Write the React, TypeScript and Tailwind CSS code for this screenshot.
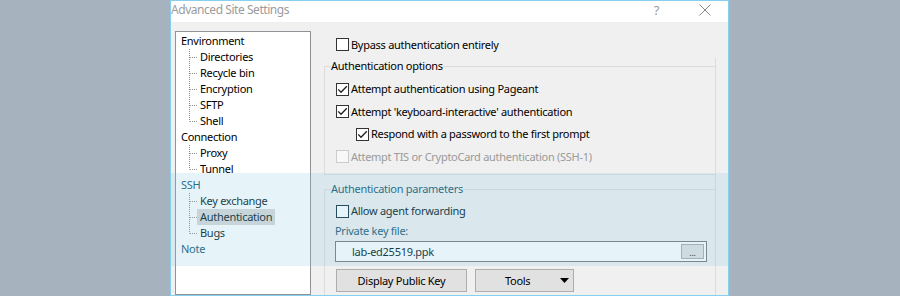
import React from "react";

// tree of pages on the left of the dialog
const tree = [
  { label: "Environment", children: ["Directories", "Recycle bin", "Encryption", "SFTP", "Shell"] },
  { label: "Connection", children: ["Proxy", "Tunnel"] },
  { label: "SSH", children: ["Key exchange", "Authentication", "Bugs"] },
  { label: "Note", children: [] as string[] },
];

// labels that sit under the highlight band get a darker teal tint
const bandHead = ["SSH", "Note"];
const bandItem = ["Key exchange", "Authentication", "Bugs"];

function CheckBox({ checked, disabled, dark }: { checked?: boolean; disabled?: boolean; dark?: boolean }) {
  return (
    <span
      className={`w-[13px] h-[13px] shrink-0 border flex items-center justify-center ${
        disabled ? "border-[#cccccc] bg-[#f8f8f8]" : dark ? "border-[#10303c] bg-white" : "border-[#333333] bg-white"
      }`}
    >
      {checked && (
        <svg width="11" height="11" viewBox="0 0 11 11">
          <path d="M1.2 5.4 L4 8.3 L9.8 2.2" fill="none" stroke="#1f1f1f" strokeWidth="1.3" />
        </svg>
      )}
    </span>
  );
}

function Connector({ last }: { last: boolean }) {
  return (
    <svg width="19" height="16" className="shrink-0">
      <line x1="8.5" y1="0" x2="8.5" y2={last ? 8.5 : 16} stroke="#8c8c8c" strokeDasharray="1 1" />
      <line x1="9" y1="8.5" x2="17" y2="8.5" stroke="#8c8c8c" strokeDasharray="1 1" />
    </svg>
  );
}

function Row({
  checked,
  disabled,
  indent,
  children,
}: {
  checked?: boolean;
  disabled?: boolean;
  indent?: boolean;
  children: React.ReactNode;
}) {
  return (
    <div className={`h-[22.5px] flex items-center gap-[2px] ${indent ? "pl-[25px]" : "pl-[5px]"}`}>
      <CheckBox checked={checked} disabled={disabled} />
      <span className={disabled ? "text-[#9a9a9a]" : "text-black"}>{children}</span>
    </div>
  );
}

export default function App() {
  return (
    <div className="relative w-[900px] h-[296px] overflow-hidden bg-[#a6b2be] flex font-['Noto_Sans',sans-serif] text-[11px] tracking-[-0.28px] leading-[16px]">
      <div className="ml-[170px] w-[559px] h-[296px] border border-[#86cfee] bg-[#f0f0f0] flex flex-col overflow-hidden">
        {/* title bar */}
        <div className="h-[21px] shrink-0 bg-white flex items-center">
          <span className="text-[#9b9b9b] text-[12px] tracking-[-0.45px] -mt-[3px]">Advanced Site Settings</span>
          <span className="ml-auto mr-[40px] text-[#9b9b9b] text-[13px] -mt-[4px]">?</span>
          <svg width="12" height="12" viewBox="0 0 12 12" className="mr-[17px] -mt-[3px]">
            <path d="M0.5 0.5 L11.5 11.5 M11.5 0.5 L0.5 11.5" stroke="#8a8a8a" strokeWidth="1" />
          </svg>
        </div>

        <div className="flex flex-1 min-h-0">
          {/* page tree */}
          <div className="mt-[9px] ml-[4px] w-[136px] shrink-0 border border-[#8f9297] bg-white pt-[1px] pl-[5px]">
            {tree.map((node) => (
              <div key={node.label}>
                <div className={`h-[16px] ${bandHead.includes(node.label) ? "text-[#145973]" : "text-black"}`}>
                  {node.label}
                </div>
                {node.children.map((child, i) => (
                  <div key={child} className="h-[16px] flex">
                    <Connector last={i === node.children.length - 1} />
                    <span
                      className={`-ml-[3px] px-[3px] ${child === "Authentication" ? "bg-[#d9d9d9]" : ""} ${
                        bandItem.includes(child) ? "text-[#001923]" : "text-black"
                      }`}
                    >
                      {child}
                    </span>
                  </div>
                ))}
              </div>
            ))}
          </div>

          {/* authentication page */}
          <div className="flex-1 flex flex-col">
            <div className="mt-[16px] h-[13px] ml-[25px] flex items-center gap-[2px]">
              <CheckBox />
              <span>Bypass authentication entirely</span>
            </div>

            <div className="mt-[7px] ml-[13px] w-[392px] flex-1 border-r border-[#dcdcdc] flex flex-col">
              <fieldset className="border-l border-t border-b border-[#dcdcdc] pl-[6px] pt-[4px] pb-[6px]">
                <legend className="leading-[16px]">Authentication options</legend>
                <Row checked>Attempt authentication using Pageant</Row>
                <Row checked>Attempt 'keyboard-interactive' authentication</Row>
                <Row checked indent>
                  Respond with a password to the first prompt
                </Row>
                <Row disabled>Attempt TIS or CryptoCard authentication (SSH-1)</Row>
              </fieldset>

              <fieldset className="mt-[6px] flex-1 border-l border-t border-[#dcdcdc] pl-[6px] pt-[3px]">
                <legend className="leading-[16px] text-[#145973]">Authentication parameters</legend>
                <div className="h-[22px] pl-[5px] flex items-center gap-[2px]">
                  <CheckBox dark />
                  <span className="text-[#001923]">Allow agent forwarding</span>
                </div>
                <div className="mt-[1px] pl-[4px] text-[#145973]">Private key file:</div>
                <div className="mt-[2px] ml-[4px] w-[372px] h-[21px] border border-[#7a7a7a] bg-white flex items-center pl-[16px] pr-[2px]">
                  <span className="text-[#001923]">lab-ed25519.ppk</span>
                  <div className="ml-auto w-[23px] h-[15px] border border-[#adadad] bg-[#e1e1e1] flex items-end justify-center text-[9px] leading-[10px] text-[#0a2a36]">
                    ...
                  </div>
                </div>
                <div className="mt-[7px] ml-[5px] flex gap-[8px]">
                  <button className="w-[131px] h-[23px] border border-[#adadad] bg-[#e1e1e1] text-black">
                    Display Public Key
                  </button>
                  <button className="w-[99px] h-[23px] border border-[#adadad] bg-[#e1e1e1] text-black flex items-center pl-[29px]">
                    <span>Tools</span>
                    <svg width="9" height="5" viewBox="0 0 9 5" className="ml-auto mr-[4px]">
                      <path d="M0 0 L9 0 L4.5 5 Z" fill="#000" />
                    </svg>
                  </button>
                </div>
              </fieldset>
            </div>
          </div>
        </div>
      </div>

      {/* highlight band laid over the dialog */}
      <div className="absolute left-[171px] top-[173px] w-[557px] h-[93px] bg-[rgba(130,200,230,0.2)] pointer-events-none" />
    </div>
  );
}
